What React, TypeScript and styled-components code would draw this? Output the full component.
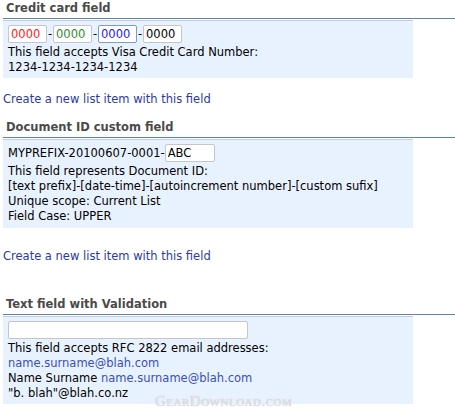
import React from 'react'
import styled, { createGlobalStyle } from 'styled-components'

const GlobalStyle = createGlobalStyle`
  body {
    margin: 0;
    background: #fff;
    font-family: "DejaVu Sans", Verdana, sans-serif;
    font-size: 11.5px;
    color: #000;
  }
`

const Page = styled.div`
  position: relative;
  width: 455px;
  height: 410px;
  overflow: hidden;
  padding-left: 3px;
  box-sizing: border-box;
`

const Section = styled.section<{ $top: number }>`
  margin-top: ${p => p.$top}px;
`

const Heading = styled.h3`
  margin: 0;
  padding: 0 0 2px 3px;
  height: 16px;
  line-height: 17px;
  font-size: 11.5px;
  font-weight: bold;
  color: #4a4a4a;
  border-bottom: 1px solid #5a84bf;
`

const Panel = styled.div<{ $height: number }>`
  margin-top: 1px;
  width: 410px;
  height: ${p => p.$height}px;
  box-sizing: border-box;
  background: #e8f2fe;
  border-top: 1px solid #c9ced6;
  padding: 4px 5px 0 5px;
  line-height: 15px;
`

const Row = styled.div`
  display: flex;
  align-items: center;
  height: 18px;
  margin-bottom: 2px;
`

const Dash = styled.span`
  width: 6px;
  text-align: center;
`

const Input = styled.input<{ $color?: string; $width: number; $focus?: boolean }>`
  width: ${p => p.$width}px;
  height: 18px;
  box-sizing: border-box;
  border: 1px solid ${p => (p.$focus ? '#7b9ccc' : '#c3c7cc')};
  border-radius: 2px;
  background: #fff;
  padding: 0 2px;
  font-family: "DejaVu Sans", Verdana, sans-serif;
  font-size: 11.5px;
  color: ${p => p.$color || '#000'};
  outline: none;
`

const Line = styled.div``

const Email = styled.span`
  color: #3a4fb8;
`

const Link = styled.a<{ $gap: number }>`
  display: block;
  margin-top: ${p => p.$gap}px;
  color: #2b3aa3;
  text-decoration: none;
  line-height: 14px;
`

const Watermark = styled.div`
  position: absolute;
  left: 155px;
  top: 393px;
  font-family: "Liberation Serif", serif;
  font-size: 15px;
  font-variant: small-caps;
  letter-spacing: 0.5px;
  color: #e3e3e3;
  text-shadow: 0 0 1px #bbb;
`

export default function App() {
  return (
    <Page>
      <GlobalStyle />
      <Section $top={0}>
        <Heading>Credit card field</Heading>
        <Panel $height={58}>
          <Row>
            <Input $width={39} $color="#ff1a1a" defaultValue="0000" />
            <Dash>-</Dash>
            <Input $width={39} $color="#2e8b2e" defaultValue="0000" />
            <Dash>-</Dash>
            <Input $width={39} $color="#1a1aff" $focus defaultValue="0000" />
            <Dash>-</Dash>
            <Input $width={39} defaultValue="0000" />
          </Row>
          <Line>This field accepts Visa Credit Card Number:</Line>
          <Line>1234-1234-1234-1234</Line>
        </Panel>
        <Link href="#" $gap={14}>Create a new list item with this field</Link>
      </Section>

      <Section $top={13}>
        <Heading>Document ID custom field</Heading>
        <Panel $height={89}>
          <Row>
            <span>MYPREFIX-20100607-0001-</span>
            <Input $width={50} defaultValue="ABC" />
          </Row>
          <Line>This field represents Document ID:</Line>
          <Line>[text prefix]-[date-time]-[autoincrement number]-[custom sufix]</Line>
          <Line>Unique scope: Current List</Line>
          <Line>Field Case: UPPER</Line>
        </Panel>
        <Link href="#" $gap={21}>Create a new list item with this field</Link>
      </Section>

      <Section $top={33}>
        <Heading>Text field with Validation</Heading>
        <Panel $height={88}>
          <Row>
            <Input $width={240} defaultValue="" />
          </Row>
          <Line>This field accepts RFC 2822 email addresses:</Line>
          <Line><Email>name.surname@blah.com</Email></Line>
          <Line>Name Surname <Email>name.surname@blah.com</Email></Line>
          <Line>"b. blah"@blah.co.nz</Line>
        </Panel>
      </Section>

      <Watermark>GearDownload.com</Watermark>
    </Page>
  )
}
